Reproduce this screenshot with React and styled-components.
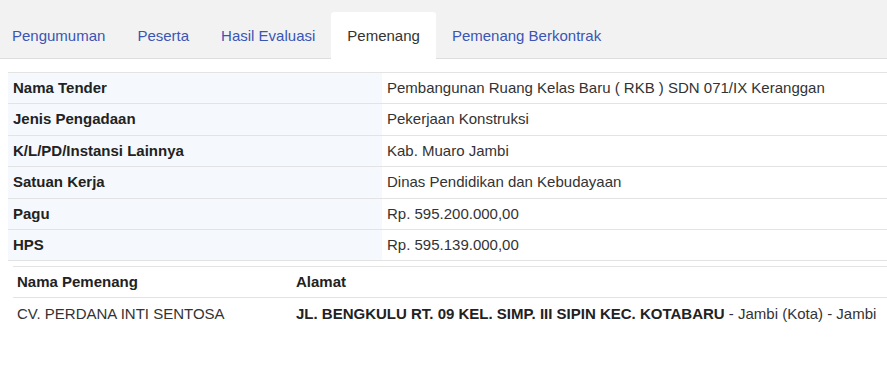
import React from "react";
import styled, { createGlobalStyle } from "styled-components";

const Global = createGlobalStyle`
  html, body { margin: 0; padding: 0; background: #fff; }
  body {
    font-family: "Liberation Sans", Arial, sans-serif;
    font-size: 15px;
    color: #333;
    overflow: hidden;
  }
`;

const TabBar = styled.div`
  display: flex;
  align-items: flex-end;
  height: 58px;
  background: #f2f2f2;
  border-bottom: 1px solid #dedede;
`;

const Tab = styled.div`
  height: 47px;
  line-height: 48px;
  padding: 0 16px;
  margin-bottom: -1px;
  color: ${(p) => (p.$active ? "#333" : "#3a55b4")};
  background: ${(p) => (p.$active ? "#fff" : "transparent")};
  border-radius: 3px 3px 0 0;
  white-space: nowrap;
  &:first-child { padding-left: 12px; }
`;

const Content = styled.div`
  padding: 13px 0 0 8px;
`;

const InfoTable = styled.table`
  width: 100%;
  border-collapse: collapse;
  border-top: 1px solid #e3e3e3;
`;

const InfoRow = styled.tr`
  border-bottom: 1px solid #e3e3e3;
`;

const Label = styled.th`
  width: 364px;
  text-align: left;
  font-weight: bold;
  color: #222;
  background: #f5f9fd;
  padding: 5px 5px;
  line-height: 20.4px;
`;

const Value = styled.td`
  padding: 5px 5px;
  line-height: 20.4px;
  color: #333;
`;

const WinnerTable = styled.table`
  margin: 5px 0 0 5px;
  width: calc(100% - 5px);
  border-collapse: collapse;
  border-top: 1px solid #e3e3e3;
`;

const HeadCell = styled.th`
  text-align: left;
  font-weight: bold;
  color: #222;
  padding: 5px 4px;
  line-height: 20px;
  border-bottom: 1px solid #e3e3e3;
  width: ${(p) => p.$w || "auto"};
`;

const Cell = styled.td`
  padding: 5px 4px;
  line-height: 21px;
  color: #333;
  white-space: nowrap;
`;

const Strong = styled.b`
  color: #222;
`;

const tabs = ["Pengumuman", "Peserta", "Hasil Evaluasi", "Pemenang", "Pemenang Berkontrak"];

const info = [
  ["Nama Tender", "Pembangunan Ruang Kelas Baru ( RKB ) SDN 071/IX Keranggan"],
  ["Jenis Pengadaan", "Pekerjaan Konstruksi"],
  ["K/L/PD/Instansi Lainnya", "Kab. Muaro Jambi"],
  ["Satuan Kerja", "Dinas Pendidikan dan Kebudayaan"],
  ["Pagu", "Rp. 595.200.000,00"],
  ["HPS", "Rp. 595.139.000,00"],
];

export default function App() {
  return (
    <>
      <Global />
      <TabBar>
        {tabs.map((t) => (
          <Tab key={t} $active={t === "Pemenang"}>{t}</Tab>
        ))}
      </TabBar>
      <Content>
        <InfoTable>
          <tbody>
            {info.map(([k, v]) => (
              <InfoRow key={k}>
                <Label>{k}</Label>
                <Value>{v}</Value>
              </InfoRow>
            ))}
          </tbody>
        </InfoTable>
        <WinnerTable>
          <thead>
            <tr>
              <HeadCell $w="271px">Nama Pemenang</HeadCell>
              <HeadCell>Alamat</HeadCell>
            </tr>
          </thead>
          <tbody>
            <tr>
              <Cell>CV. PERDANA INTI SENTOSA</Cell>
              <Cell>
                <Strong>JL. BENGKULU RT. 09 KEL. SIMP. III SIPIN KEC. KOTABARU</Strong> - Jambi (Kota) - Jambi
              </Cell>
            </tr>
          </tbody>
        </WinnerTable>
      </Content>
    </>
  );
}
